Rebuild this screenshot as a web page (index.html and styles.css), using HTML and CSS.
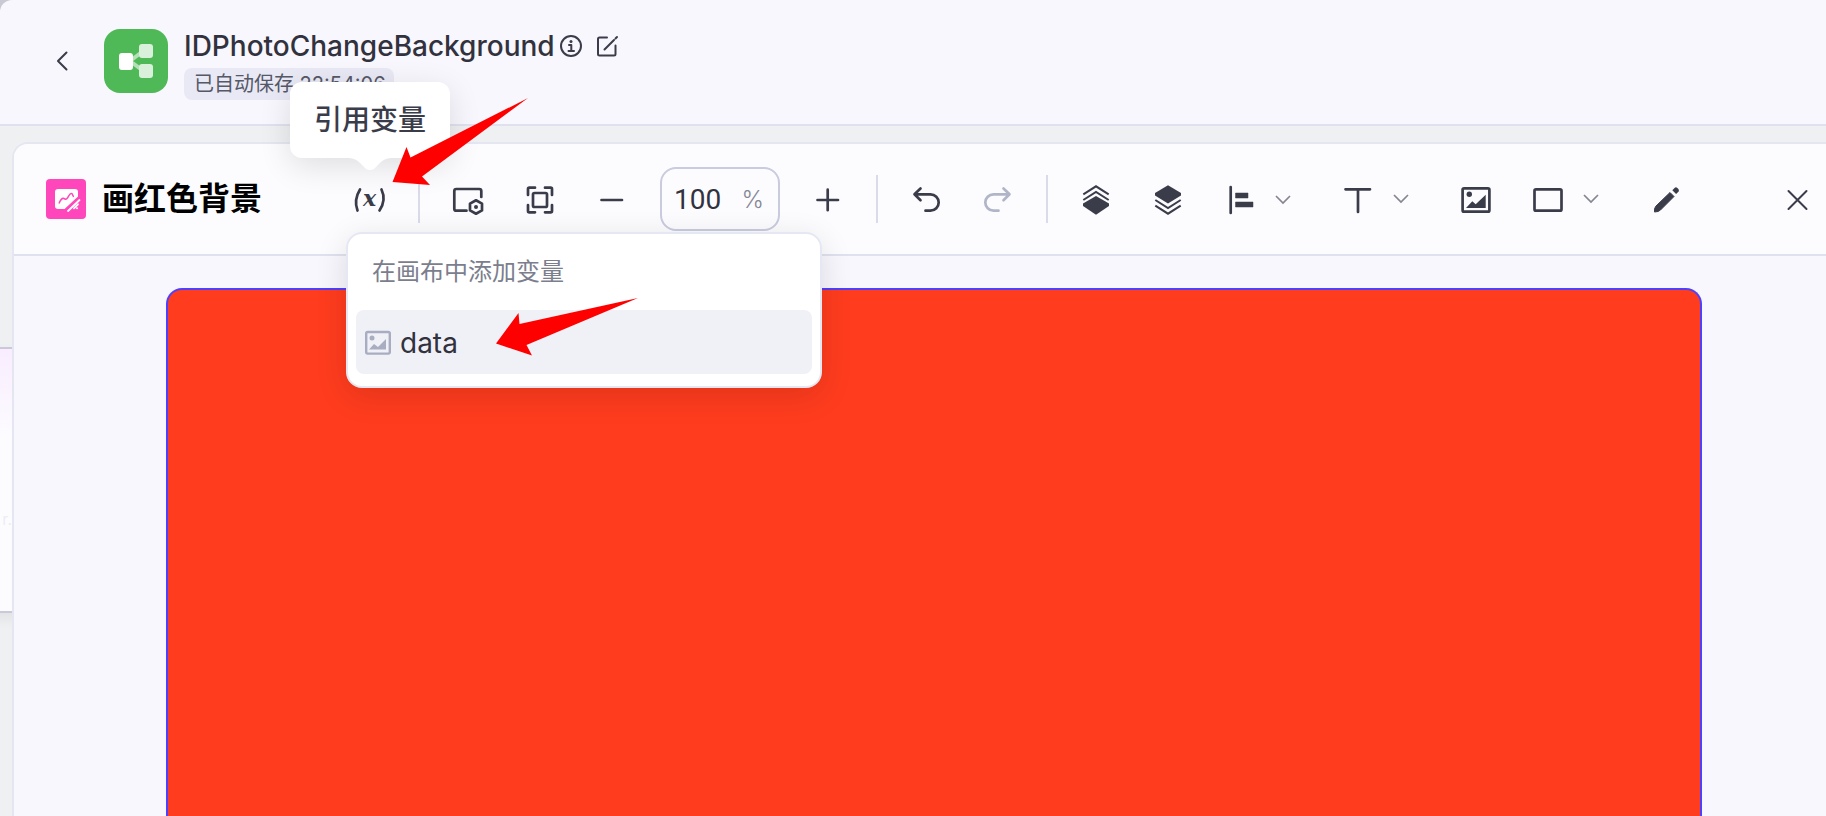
FILE: index.html
```html
<!DOCTYPE html>
<html lang="zh-CN">
<head>
<meta charset="utf-8">
<title>IDPhotoChangeBackground</title>
<link rel="stylesheet" href="styles.css">
</head>
<body>
<div class="app">
  <header class="header">
    <button class="back" aria-label="返回">
      <svg width="16" height="24" viewBox="0 0 16 24"><path d="M12.500 3.500 4 12l8.500 8.500" class="line"/></svg>
    </button>
    <svg class="logo" width="64" height="64" viewBox="0 0 64 64">
      <rect width="64" height="64" rx="16" fill="#4fb857"/>
      <path d="M26 32 38 23M26 32l12 9" stroke="#b4e0b7" stroke-width="4"/>
      <rect x="35" y="15" width="14" height="14" rx="3" fill="#d9f0da"/>
      <rect x="35" y="35" width="14" height="14" rx="3" fill="#d9f0da"/>
      <rect x="15" y="24" width="14" height="17" rx="3" fill="#fff"/>
    </svg>
    <div class="heading">
      <div class="name-row">
        <h1 class="name">IDPhotoChangeBackground</h1>
        <button class="mini" aria-label="信息">
          <svg width="24" height="24" viewBox="0 0 24 24"><circle cx="12" cy="12" r="10" class="line"/><circle cx="12" cy="7.500" r="1.500" fill="#3a3c4a"/><path d="M10 11h2.300v6M9.500 17h5.500" class="line"/></svg>
        </button>
        <button class="mini" aria-label="编辑">
          <svg width="24" height="24" viewBox="0 0 24 24"><path d="M12 3.500H4.500q-1.500 0-1.500 1.500V20q0 1.500 1.500 1.500H19q1.500 0 1.500-1.500V11.500M9.500 15.500 19 6M20.500 4.500 22 3" class="line"/></svg>
        </button>
      </div>
      <span class="saved">已自动保存 22:54:06</span>
    </div>
  </header>

  <main class="workspace">
    <div class="node"><span class="node-text">r.</span></div>
    <section class="panel">
      <div class="toolbar">
        <div class="title">
          <svg width="40" height="40" viewBox="0 0 40 40">
            <rect width="40" height="40" rx="4" fill="#ff46bb"/>
            <path d="M12 10h17q3 0 3 3v6L20 30h-8q-3 0-3-3V13q0-3 3-3z" fill="#fff"/>
            <path d="M13 24.500c1.500-4 3.500-5.500 5-5s1.500 1.500 3 0 2.500-5.500 4.500-5 .500 3 2.500 3" fill="none" stroke="#ff46bb" stroke-width="1.500"/>
            <path d="M20.500 31.500 34 19" stroke="#ff46bb" stroke-width="5"/>
            <path d="M22 31.500 33.500 20.500M28 28.800l4-4" stroke="#fff" stroke-width="1.800" stroke-linecap="round" transform="translate(0 .5)"/>
            <circle cx="31" cy="29.300" r="1" fill="#fff"/>
          </svg>
          <h2 class="title-text">画红色背景</h2>
        </div>

        <div class="variable">
          <button class="tool" aria-label="引用变量" aria-haspopup="menu" aria-expanded="true">
            <svg viewBox="0 0 48 48"><path d="M14 14.500Q7.500 25 11.500 35.500M35.500 14.500Q40.500 25 33.500 35.500" class="bold"/><text x="23.500" y="31" class="var-x" text-anchor="middle">x</text></svg>
          </button>
          <div class="tooltip" role="tooltip">引用变量
            <svg class="tooltip-tail" width="44" height="13" viewBox="0 0 44 13"><path d="M0 0h44c-8 0-11 4-15 8-3 3-4 4-7 4s-4-1-7-4C11 4 8 0 0 0z" fill="#fff"/></svg>
          </div>
          <div class="menu" role="menu">
            <div class="menu-head">在画布中添加变量</div>
            <button class="menu-item" role="menuitem">
              <svg width="28" height="28" viewBox="0 0 28 28"><rect x="2.200" y="3" width="23.600" height="21.600" rx="1.500" fill="none" stroke="#a9adc1" stroke-width="2.400"/><circle cx="8" cy="9" r="2.500" fill="#a9adc1"/><path d="M5 20.500 10 15l4 3 8-8v10.500z" fill="#a9adc1"/></svg>
              <span>data</span>
            </button>
          </div>
        </div>

        <span class="divider"></span>
        <button class="tool" aria-label="画布设置"><svg viewBox="0 0 48 48"><path d="M37.300 22V16q0-2-2-2H12.300q-2 0-2 2v17.700q0 2 2 2H22.500" class="bold"/><path d="m32 25.300 6 3.300v6.800l-6 3.300-6-3.300v-6.800z" class="bold"/><circle cx="32" cy="32" r="2" fill="#3a3c4a"/></svg></button>
        <button class="tool" aria-label="适应画布"><svg viewBox="0 0 48 48"><path d="M12 20v-6q0-1.300 1.300-1.300H19M29 12.700h5.700q1.300 0 1.300 1.300v6M36 30v6q0 1.300-1.300 1.300H29M19 37.300h-5.700q-1.300 0-1.300-1.300v-6" class="bold"/><rect x="17" y="18" width="14" height="14" rx="1.500" class="bold"/></svg></button>
        <button class="tool" aria-label="缩小"><svg viewBox="0 0 48 48"><path d="M13.500 25h20.500" class="bold"/></svg></button>
        <label class="zoom"><input class="zoom-input" type="text" value="100" aria-label="缩放比例"><span class="zoom-unit">%</span></label>
        <button class="tool" aria-label="放大"><svg viewBox="0 0 48 48"><path d="M13.500 25H34M23.700 14.700v20.500" class="bold"/></svg></button>
        <span class="divider"></span>
        <button class="tool" aria-label="撤销"><svg viewBox="0 0 48 48"><path d="m18.500 13.500-6 5.800 6 6M12.500 19.300h16a8.200 8.200 0 0 1 0 16.400H23.500" class="bold"/></svg></button>
        <button class="tool" aria-label="重做" disabled><svg viewBox="0 0 48 48"><path d="m29.500 13.500 6 5.800-6 6M35.500 19.300h-16a8.200 8.200 0 0 0 0 16.400H24.500" class="bold muted"/></svg></button>
        <span class="divider"></span>
        <button class="tool" aria-label="置顶"><svg viewBox="0 0 48 48"><path d="m24 21 13 7.500v2.500L24 39.800 11 31v-2.500z" fill="#3a3c4a"/><path d="m11.300 19.300 12.700-8 12.700 8M11.300 25 24 17l12.700 8" class="line square"/></svg></button>
        <button class="tool" aria-label="置底"><svg viewBox="0 0 48 48"><path d="m24 10.200 13 7.800v2.500L24 28.500 11 20.500V18z" fill="#3a3c4a"/><path d="m11.300 25 12.700 8 12.700-8M11.300 30.700l12.700 8 12.700-8" class="line square"/></svg></button>
        <div class="pair">
          <button class="tool" aria-label="对齐"><svg viewBox="0 0 48 48"><path d="M14.700 12v26" class="bold"/><path d="M19.500 18H32v5H19.500zM19.500 27H37v5H19.500z" fill="#3a3c4a" stroke="#3a3c4a" stroke-linejoin="round" stroke-width=".5"/></svg></button>
          <button class="caret" aria-label="对齐选项"><svg width="16" height="16" viewBox="0 0 16 16"><path d="m1 5 7 7 7-7"/></svg></button>
        </div>
        <div class="pair">
          <button class="tool" aria-label="文本"><svg viewBox="0 0 48 48"><path d="M11.500 14.300h24.500M24 14.300V37" class="bold"/></svg></button>
          <button class="caret" aria-label="文本选项"><svg width="16" height="16" viewBox="0 0 16 16"><path d="m1 4 7 7 7-7"/></svg></button>
        </div>
        <button class="tool" aria-label="图片"><svg viewBox="0 0 48 48"><rect x="10.600" y="13.300" width="26.800" height="23.400" rx="1.500" class="bold"/><circle cx="17.300" cy="19.300" r="2.700" fill="#3a3c4a"/><path d="m14 33 6.300-6.700 3.400 3 10-9.600V33z" fill="#3a3c4a"/></svg></button>
        <div class="pair">
          <button class="tool" aria-label="矩形"><svg viewBox="0 0 48 48"><rect x="10.500" y="14.300" width="27" height="21.400" rx="1.500" class="bold"/></svg></button>
          <button class="caret" aria-label="形状选项"><svg width="16" height="16" viewBox="0 0 16 16"><path d="m1 4 7 7 7-7"/></svg></button>
        </div>
        <button class="tool" aria-label="画笔"><svg viewBox="0 0 48 48"><path d="m28 17.500 4 4-13.500 13.500q-2 2-6 2-.500-4 1.500-6z" fill="#3a3c4a" stroke="#3a3c4a" stroke-linejoin="round"/><path d="m30.300 15.200 2.500-2.500q1.200-.800 2.600.300l1 1q1 1.400.200 2.600l-2.500 2.500z" fill="#3a3c4a"/></svg></button>
        <button class="tool close" aria-label="关闭"><svg viewBox="0 0 48 48"><path d="m15.500 16 18 18M33.500 16l-18 18" class="line"/></svg></button>
      </div>
      <div class="stage"><div class="canvas"></div></div>
    </section>
  </main>

  <svg class="notes" width="700" height="400" viewBox="0 0 700 400" aria-hidden="true">
    <path d="M392.500 182 406.500 147l4 10.500L528 98 422 176.500l8 8.500z"/>
    <path d="M496 343.500 518.500 313l1 11L638 298 526.500 345l5.500 10.500z"/>
  </svg>
</div>
</body>
</html>
```
FILE: styles.css
```css
* { box-sizing: border-box; }

body {
  margin: 0;
  background: #c9c9d4;
  color: #32323e;
  font-family: Inter, "Noto Sans CJK SC", sans-serif;
}

button {
  padding: 0;
  border: 0;
  background: none;
  color: inherit;
  font: inherit;
}

svg { display: block; flex: none; }

h1, h2 { margin: 0; }

.line { fill: none; stroke: #3a3c4a; stroke-width: 2; stroke-linecap: round; stroke-linejoin: round; }
.bold { fill: none; stroke: #3a3c4a; stroke-width: 2.7; stroke-linecap: round; stroke-linejoin: round; }
.square { stroke-linecap: butt; stroke-linejoin: miter; }
.muted { stroke: #b1b5c8; }

.app {
  position: relative;
  display: flex;
  flex-direction: column;
  height: 100vh;
  overflow: hidden;
}

.header {
  display: flex;
  align-items: center;
  flex: none;
  height: 126px;
  padding: 0 54px 2px;
  border-bottom: 2px solid #dfe1ee;
  border-top-left-radius: 12px;
  background: #f7f7fd;
}

.back { margin-right: 34px; }

.heading {
  display: flex;
  flex-direction: column;
  align-items: flex-start;
  gap: 4px;
  margin: 6px 0 0 16px;
}

.name-row { display: flex; align-items: center; gap: 4px; height: 36px; }
.name { font-size: 28px; font-weight: 500; line-height: 36px; }
.mini { display: block; }
.mini + .mini { margin-left: 8px; }

.saved {
  padding: 0 8px 0 10px;
  border-radius: 8px;
  background: #e9e9f5;
  color: #555867;
  font-size: 20px;
  line-height: 32px;
}

.workspace {
  position: relative;
  flex: 1;
  min-height: 0;
  padding: 16px 0 0 12px;
  background: #eff0f2;
}

.node {
  position: absolute;
  top: 221px;
  left: -200px;
  width: 260px;
  height: 266px;
  border: 2px solid #c8cadb;
  background: linear-gradient(#f9edff, #fcfcff 90px);
  box-shadow: 0 6px 12px rgba(0, 0, 0, .06);
}

.node-text {
  position: absolute;
  right: 46px;
  top: 152px;
  color: #ededf2;
  font-size: 16px;
  line-height: 36px;
}

.panel {
  position: relative;
  display: flex;
  flex-direction: column;
  height: 100%;
  border: solid #e4e6f2;
  border-width: 2px 0 0 2px;
  border-top-left-radius: 16px;
  background: #f7f7fd;
}

.toolbar {
  display: flex;
  align-items: center;
  gap: 24px;
  flex: none;
  height: 112px;
  padding: 0 5px 0 32px;
  border-bottom: 2px solid #dfe1ee;
  border-top-left-radius: 14px;
  background: #fcfcff;
}

.title { display: flex; align-items: center; gap: 16px; flex: 0 0 276px; }
.title-text { color: #000; font-size: 32px; font-weight: 700; line-height: 40px; }

.tool { display: block; flex: none; width: 48px; height: 48px; }
.tool svg { width: 48px; height: 48px; }
.close { margin-left: auto; }

.divider { flex: none; width: 2px; height: 48px; background: #d9dbe9; }

.pair { display: flex; flex: none; }
.caret { display: flex; align-items: center; justify-content: center; width: 38px; height: 48px; margin-right: 8px; }
.caret path { fill: none; stroke: #85868f; stroke-width: 1.7; }

.zoom {
  display: flex;
  align-items: center;
  flex: none;
  width: 120px;
  height: 64px;
  padding: 2px 14px 0 12px;
  border: 2px solid #c9cbde;
  border-radius: 16px;
}

.zoom-input {
  flex: 1;
  min-width: 0;
  padding: 0;
  border: 0;
  outline: 0;
  background: none;
  color: #32323e;
  font: 400 28px/36px Roboto, sans-serif;
}

.zoom-unit { color: #858896; font: 300 24px/36px Inter, sans-serif; }

.var-x { fill: #3a3c4a; font: italic 700 22px "DejaVu Serif", serif; }

.variable { position: relative; z-index: 2; }

.tooltip {
  position: absolute;
  bottom: calc(100% + 17px);
  left: 50%;
  margin-left: -80px;
  width: 160px;
  padding: 18px 0;
  border-radius: 12px;
  background: #fff;
  box-shadow: 0 8px 32px rgba(0, 0, 0, .12);
  color: #3a3c4a;
  font-size: 28px;
  font-weight: 500;
  line-height: 40px;
  text-align: center;
}

.tooltip-tail { position: absolute; top: 100%; left: 58px; }

.menu {
  position: absolute;
  top: calc(100% + 9px);
  left: 0;
  width: 476px;
  padding: 0 8px 12px;
  border: 2px solid #e5e8f2;
  border-radius: 16px;
  background: #fff;
  box-shadow: 0 8px 32px rgba(0, 0, 0, .12);
}

.menu-head { padding: 20px 16px; color: #7b7e8d; font-size: 24px; line-height: 36px; }

.menu-item {
  display: flex;
  align-items: center;
  gap: 8px;
  width: 100%;
  height: 64px;
  padding: 2px 8px 0;
  border-radius: 8px;
  background: #f0f1f7;
  font-size: 28px;
}

.stage { display: flex; flex: 1; min-height: 0; padding: 32px 124px 0 152px; }

.canvas {
  flex: 1;
  border: 2px solid #4d40ff;
  border-bottom: 0;
  border-radius: 16px 16px 0 0;
  background: #ff3c1e;
}

.notes { position: absolute; top: 0; left: 0; z-index: 5; fill: #f00; pointer-events: none; }
```
